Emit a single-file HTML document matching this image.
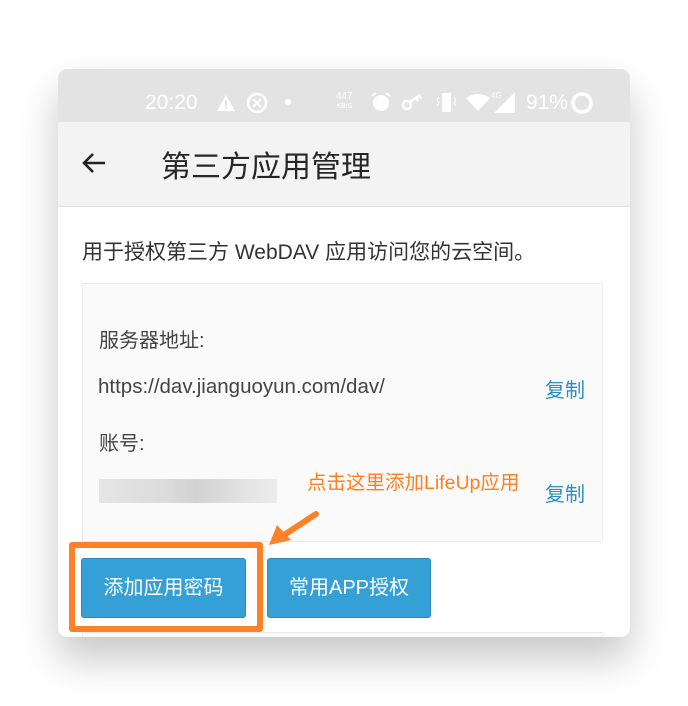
<!DOCTYPE html>
<html><head><meta charset="utf-8"><style>
*{margin:0;padding:0;box-sizing:border-box}
body{width:688px;height:706px;background:#fff;position:relative;overflow:hidden;font-family:"Liberation Sans","Noto Sans CJK SC",sans-serif}
.card{position:absolute;left:58px;top:69px;width:572px;height:568px;border-radius:9px;background:#fff;overflow:hidden;box-shadow:0 22px 40px rgba(0,0,0,.22)}
.sb{position:absolute;left:0;top:0;width:572px;height:53px;background:#e3e3e3;color:#fff}
.tb{position:absolute;left:0;top:53px;width:572px;height:85px;background:#f3f3f3;border-bottom:1px solid #e2e2e2}
.abs{position:absolute;white-space:nowrap}
.box{position:absolute;left:24px;top:214px;width:521px;height:259px;background:#fafafa;border:1px solid #ececec}
.btn{position:absolute;top:489px;height:60px;background:#35a0d6;border:1px solid #2d8bbd;border-radius:3px;color:#fff;font-size:20px;text-align:center;line-height:58px}
.blue{color:#2a8fc7;font-size:20px}
</style></head><body>
<div class="card">
 <div class="sb">
  <div class="abs" style="left:87px;top:22px;font-size:21px;color:#fff">20:20</div>
  <svg class="abs" style="left:158px;top:25px" width="20" height="18"><path d="M10 1L19 17H1Z" fill="#fff"/><rect x="9" y="6" width="2" height="6" fill="#e3e3e3"/><rect x="9" y="13" width="2" height="2" fill="#e3e3e3"/></svg>
  <svg class="abs" style="left:188px;top:23px" width="22" height="22"><circle cx="11" cy="11" r="9" fill="none" stroke="#fff" stroke-width="2.5"/><path d="M7 7l8 8M15 7l-8 8" stroke="#fff" stroke-width="2"/></svg>
  <div class="abs" style="left:227px;top:30px;width:6px;height:6px;border-radius:3px;background:#fff"></div>
  <div class="abs" style="left:278px;top:23px;font-size:10px;line-height:9px;text-align:center">447<br><span style="font-size:7px">KB/S</span></div>
  <svg class="abs" style="left:312px;top:22px" width="22" height="22"><circle cx="11" cy="12" r="8" fill="#fff"/><path d="M2 5l4-3M20 5l-4-3" stroke="#fff" stroke-width="2"/></svg>
  <svg class="abs" style="left:344px;top:25px" width="22" height="16"><circle cx="5" cy="11" r="4" fill="none" stroke="#fff" stroke-width="2.5"/><path d="M8 8l10-7M14 4l2 3M17 2l2 2" stroke="#fff" stroke-width="2.5"/></svg>
  <svg class="abs" style="left:378px;top:23px" width="20" height="22"><rect x="6" y="1" width="9" height="19" rx="1" fill="#fff"/><path d="M3 5l-2 3 2 3-2 3M18 5l2 3-2 3 2 3" stroke="#fff" fill="none"/></svg>
  <svg class="abs" style="left:408px;top:25px" width="24" height="18"><path d="M0 4Q12-4 24 4L12 17Z" fill="#fff"/></svg>
  <svg class="abs" style="left:433px;top:21px" width="25" height="24"><path d="M24 2V23H3Z" fill="#fff"/><text x="0" y="8" font-size="8" fill="#fff" font-family="Liberation Sans">4G</text></svg>
  <div class="abs" style="left:468px;top:22px;font-size:21px">91%</div>
  <svg class="abs" style="left:512px;top:22px" width="24" height="24"><circle cx="12" cy="12" r="9" fill="none" stroke="#fff" stroke-width="3.5"/></svg>
 </div>
 <div class="tb">
  <svg class="abs" style="left:23px;top:30px" width="26" height="22"><path d="M24 11H3M12 2L3 11l9 9" fill="none" stroke="#222" stroke-width="2.6"/></svg>
  <div class="abs" style="left:103px;top:20px;font-size:30px;color:#262626">第三方应用管理</div>
 </div>
 <div class="abs" style="left:24px;top:167px;font-size:21px;color:#333">用于授权第三方 WebDAV 应用访问您的云空间。</div>
 <div class="box">
  <div class="abs" style="left:16px;top:40px;font-size:20px;color:#444">服务器地址:</div>
  <div class="abs" style="left:15px;top:91px;font-size:20.5px;color:#444">https://dav.jianguoyun.com/dav/</div>
  <div class="abs blue" style="left:462px;top:90px">复制</div>
  <div class="abs" style="left:16px;top:143px;font-size:20px;color:#444">账号:</div>
  <div class="abs" style="left:16px;top:195px;width:178px;height:24px;background:linear-gradient(90deg,#e6e6e6,#dadada 40%,#d2d2d2 55%,#e2e2e2 80%,#ececec)"></div>
  <div class="abs" style="left:224px;top:182px;font-size:19.5px;color:#ff7f1f">点击这里添加LifeUp应用</div>
  <div class="abs blue" style="left:462px;top:194px">复制</div>
 </div>
 <svg class="abs" style="left:205px;top:440px" width="60" height="50"><path d="M53 5L18 28" stroke="#ff8127" stroke-width="6" stroke-linecap="round"/><path d="M6 36L14 16 28 31Z" fill="#ff8127"/></svg>
 <div class="btn" style="left:23px;width:165px">添加应用密码</div>
 <div class="btn" style="left:209px;width:164px">常用APP授权</div>
 <div class="abs" style="left:11px;top:473px;width:194px;height:90px;border:6px solid #ff8127;border-radius:3px"></div>
 <div class="abs" style="left:24px;top:563px;width:521px;height:10px;border:1px solid #ececec;background:#fafafa"></div>
</div>
</body></html>
